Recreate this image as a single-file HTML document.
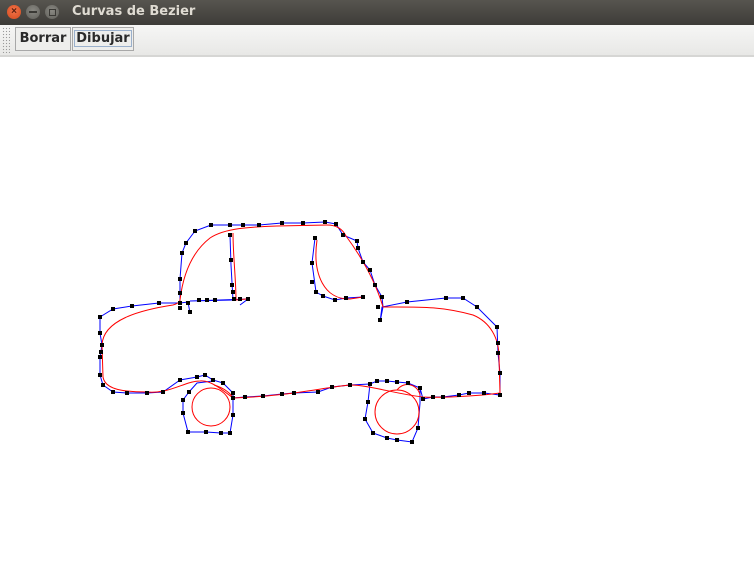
<!DOCTYPE html>
<html><head><meta charset="utf-8">
<style>
html,body{margin:0;padding:0;width:754px;height:572px;overflow:hidden;background:#fff;font-family:"Liberation Sans","DejaVu Sans",sans-serif}
.title{position:absolute;left:0;top:0;width:754px;height:25px;background:linear-gradient(#57554f,#3d3c38)}
.title span{position:absolute;left:72px;top:4px;color:#dfdbd2;font-weight:bold;font-size:13px;font-family:"DejaVu Sans","Liberation Sans",sans-serif}
.c{position:absolute;top:5px;width:14px;height:14px;border-radius:50%}
.tb{position:absolute;left:0;top:25px;width:754px;height:30px;background:linear-gradient(#f6f6f5,#e8e8e6);border-bottom:2px solid #d6d6d4}
.grip{position:absolute;left:2px;top:2px;width:8px;height:26px;background-image:radial-gradient(#9a9a9a 0.7px,transparent 0.8px);background-size:3px 3px}
.btn{position:absolute;top:2px;height:24px;border:1px solid #a8a8a8;background:#eeeeec;box-sizing:border-box;font-weight:bold;font-size:13px;color:#2a2a2a;font-family:"DejaVu Sans","Liberation Sans",sans-serif;line-height:22px;text-align:center}
</style></head><body>
<div class="title">
<div class="c" style="left:7px;background:radial-gradient(circle at 50% 40%,#f2744a,#d44a1d);"></div>
<div style="position:absolute;left:7px;top:4px;width:14px;text-align:center;color:#5a2010;font-size:10px;line-height:16px;font-weight:bold">×</div>
<div class="c" style="left:26px;background:radial-gradient(circle at 50% 40%,#8a8983,#5f5e59);"></div>
<div style="position:absolute;left:29px;top:11px;width:8px;height:2px;background:#3a3935"></div>
<div class="c" style="left:45px;background:radial-gradient(circle at 50% 40%,#8a8983,#5f5e59);"></div>
<div style="position:absolute;left:49px;top:9px;width:5px;height:5px;border:1px solid #3a3935"></div>
<span>Curvas de Bezier</span>
</div>
<div class="tb">
<div class="grip"></div>
<div class="btn" style="left:15px;width:56px">Borrar</div>
<div class="btn" style="left:72px;width:62px"><span style="border:1px solid #9ab0cc;padding:0 1px">Dibujar</span></div>
</div>
<svg style="position:absolute;left:0;top:0" width="754" height="572">
<g fill="none" stroke="#0000ff" stroke-width="1">
<polyline points="180,303 180,293 180,279 182,253 186,243 195,231 211,225 230,225 243,225 259,225 282,223 303,223 325,222 336,224 343,235 357,241 358,248 363,262 370,270 375,285 382,297 383,307 380,322 382,307 407,302 446,298 463,298 477,307 497,327 498,353 500,373 500,395 484,393 469,393 459,395 443,397 433,397 423,399 420,388 408,383 397,382 387,381 377,381 370,384 368,402 365,419 373,433 387,438 397,440 412,442 418,428 420,403 420,388"/>
<polyline points="370,384 350,385 332,387 318,392 294,393 282,394 263,396 245,397 233,398 233,393 223,383 213,380 205,375 197,377 180,380 163,392 147,393 127,393 113,392 103,385 100,375 100,357 102,345 100,333 100,317 113,309 132,306 159,303 180,303 188,302 190,313"/>
<polyline points="233,398 233,415 230,433 221,433 206,432 188,432 183,413 183,400 189,392 197,383 213,381"/>
<polyline points="230,235 231,265 233,300 190,301 248,299 240,305"/>
<polyline points="315,238 312,263 316,292 323,296 335,300 346,298 363,297"/>
</g>
<g fill="none" stroke="#ff0000" stroke-width="1">
<path d="M180,300 C183,275 192,252 210,238 C225,228 250,227 277,226 L327,225 C338,225 343,230 346,236 C360,255 375,280 383,307 C420,307 440,306 473,315 C490,322 499,338 499,357 L500,393 C480,396 440,398 423,397 C395,394 370,385 350,385 C320,388 290,396 233,398 C220,388 210,380 200,381 C185,381 170,394 147,392 C125,392 105,390 103,377 L102,345 C103,320 140,310 173,305 C177,304 180,302 180,300 Z"/>
<path d="M233,233 C233,255 236,280 236,300 L246,299"/>
<path d="M317,240 C312,275 325,300 350,299 L363,297"/>
<circle cx="211" cy="407" r="19"/>
<circle cx="397" cy="412" r="22"/>
<path d="M420,395 C418,385 405,380 397,390"/>
<path d="M214,385 C225,388 232,395 233,398"/>
</g>
<g fill="#000">
<rect x="209" y="223" width="4" height="4"/><rect x="228" y="223" width="4" height="4"/><rect x="241" y="223" width="4" height="4"/><rect x="257" y="223" width="4" height="4"/><rect x="280" y="221" width="4" height="4"/><rect x="301" y="221" width="4" height="4"/><rect x="323" y="220" width="4" height="4"/><rect x="334" y="222" width="4" height="4"/><rect x="341" y="233" width="4" height="4"/><rect x="355" y="239" width="4" height="4"/><rect x="356" y="246" width="4" height="4"/><rect x="361" y="260" width="4" height="4"/><rect x="368" y="268" width="4" height="4"/><rect x="373" y="283" width="4" height="4"/><rect x="380" y="295" width="4" height="4"/><rect x="376" y="305" width="4" height="4"/><rect x="378" y="318" width="4" height="4"/><rect x="405" y="300" width="4" height="4"/><rect x="444" y="296" width="4" height="4"/><rect x="461" y="296" width="4" height="4"/><rect x="475" y="305" width="4" height="4"/><rect x="495" y="325" width="4" height="4"/><rect x="496" y="341" width="4" height="4"/><rect x="496" y="351" width="4" height="4"/><rect x="498" y="371" width="4" height="4"/><rect x="498" y="393" width="4" height="4"/><rect x="482" y="391" width="4" height="4"/><rect x="467" y="391" width="4" height="4"/><rect x="457" y="393" width="4" height="4"/><rect x="441" y="395" width="4" height="4"/><rect x="431" y="395" width="4" height="4"/><rect x="421" y="397" width="4" height="4"/><rect x="418" y="386" width="4" height="4"/><rect x="406" y="381" width="4" height="4"/><rect x="395" y="380" width="4" height="4"/><rect x="385" y="379" width="4" height="4"/><rect x="375" y="379" width="4" height="4"/><rect x="368" y="382" width="4" height="4"/><rect x="366" y="400" width="4" height="4"/><rect x="363" y="417" width="4" height="4"/><rect x="371" y="431" width="4" height="4"/><rect x="385" y="436" width="4" height="4"/><rect x="395" y="438" width="4" height="4"/><rect x="410" y="440" width="4" height="4"/><rect x="416" y="426" width="4" height="4"/><rect x="348" y="383" width="4" height="4"/><rect x="330" y="385" width="4" height="4"/><rect x="316" y="390" width="4" height="4"/><rect x="292" y="391" width="4" height="4"/><rect x="280" y="392" width="4" height="4"/><rect x="261" y="394" width="4" height="4"/><rect x="243" y="395" width="4" height="4"/><rect x="231" y="396" width="4" height="4"/><rect x="231" y="391" width="4" height="4"/><rect x="221" y="381" width="4" height="4"/><rect x="211" y="378" width="4" height="4"/><rect x="203" y="373" width="4" height="4"/><rect x="195" y="375" width="4" height="4"/><rect x="178" y="378" width="4" height="4"/><rect x="161" y="390" width="4" height="4"/><rect x="145" y="391" width="4" height="4"/><rect x="125" y="391" width="4" height="4"/><rect x="111" y="390" width="4" height="4"/><rect x="101" y="383" width="4" height="4"/><rect x="98" y="373" width="4" height="4"/><rect x="98" y="355" width="4" height="4"/><rect x="99" y="350" width="4" height="4"/><rect x="100" y="343" width="4" height="4"/><rect x="98" y="331" width="4" height="4"/><rect x="98" y="315" width="4" height="4"/><rect x="111" y="307" width="4" height="4"/><rect x="130" y="304" width="4" height="4"/><rect x="157" y="301" width="4" height="4"/><rect x="178" y="301" width="4" height="4"/><rect x="178" y="306" width="4" height="4"/><rect x="178" y="291" width="4" height="4"/><rect x="178" y="277" width="4" height="4"/><rect x="180" y="251" width="4" height="4"/><rect x="184" y="241" width="4" height="4"/><rect x="193" y="229" width="4" height="4"/><rect x="186" y="301" width="4" height="4"/><rect x="188" y="310" width="4" height="4"/><rect x="197" y="298" width="4" height="4"/><rect x="205" y="298" width="4" height="4"/><rect x="213" y="298" width="4" height="4"/><rect x="228" y="233" width="4" height="4"/><rect x="229" y="258" width="4" height="4"/><rect x="230" y="283" width="4" height="4"/><rect x="231" y="290" width="4" height="4"/><rect x="232" y="297" width="4" height="4"/><rect x="238" y="297" width="4" height="4"/><rect x="246" y="297" width="4" height="4"/><rect x="313" y="236" width="4" height="4"/><rect x="310" y="261" width="4" height="4"/><rect x="310" y="280" width="4" height="4"/><rect x="314" y="290" width="4" height="4"/><rect x="321" y="294" width="4" height="4"/><rect x="333" y="298" width="4" height="4"/><rect x="344" y="296" width="4" height="4"/><rect x="361" y="295" width="4" height="4"/><rect x="187" y="390" width="4" height="4"/><rect x="181" y="398" width="4" height="4"/><rect x="181" y="411" width="4" height="4"/><rect x="186" y="430" width="4" height="4"/><rect x="204" y="430" width="4" height="4"/><rect x="219" y="431" width="4" height="4"/><rect x="228" y="431" width="4" height="4"/><rect x="231" y="413" width="4" height="4"/>
</g>
</svg>
</body></html>
